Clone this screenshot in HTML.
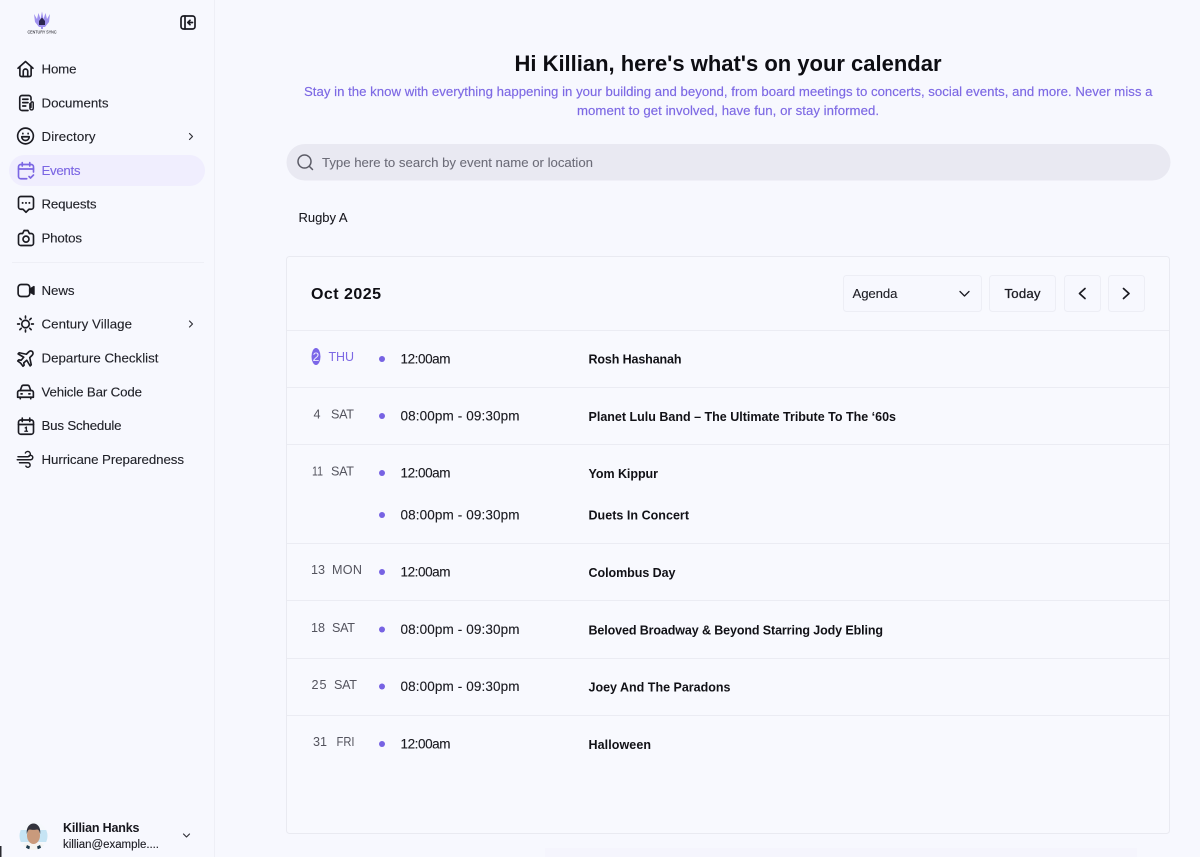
<!DOCTYPE html>
<html><head><meta charset="utf-8"><title>Events</title>
<style>
html,body{margin:0;padding:0;width:1200px;height:857px;overflow:hidden;background:#f7f8fe}
svg{display:block;position:absolute;left:0;top:0}
text{font-family:"Liberation Sans",sans-serif;font-size:13px;fill:#1d1d24;stroke:#1d1d24;stroke-width:.18px}
.n{font-size:13.300px;fill:#1f2027;stroke:#1f2027;stroke-width:.12px}
.t{font-size:13.500px;fill:#1a1a20;stroke:#1a1a20;stroke-width:.12px}
.b{font-weight:700;stroke:none;fill:#111116;font-size:12.500px}
.g{fill:#54545e;stroke:none;font-size:12.600px}
.ic{fill:none;stroke:#1b1b22;stroke-width:2;stroke-linecap:round;stroke-linejoin:round}
.l{stroke:#ebecf3;stroke-width:1}
.btn{fill:#f7f8fe;stroke:#edeef5}
.d{fill:#7763e3}
</style></head><body>
<svg width="1200" height="857" viewBox="0 0 1200 857" xmlns="http://www.w3.org/2000/svg">
<rect width="1200" height="857" fill="#f7f8fe"/>
<line x1="214.500" y1="0" x2="214.500" y2="857" stroke="#eeeff6"/>
<rect x="0" y="846" width="1.500" height="11" fill="#2a2a30"/>

<!-- logo -->
<g fill="#9f91ee">
<path d="M34 14 L37 19 L38.500 13 L40.500 19 L42 11.500 L43.500 19 L45.500 13 L47 19 L50 14 L49 22 L45 27 L39 27 L35 22Z"/>
<path d="M42 17.500 L45 21 V25 H39 V21Z" fill="#2b2650"/>
<rect x="41" y="27" width="2" height="2"/>
</g>
<text x="27.500" y="33.500" style="font-size:4.200px;stroke-width:.05px" textLength="29" lengthAdjust="spacingAndGlyphs">CENTURY SYNC</text>

<!-- collapse -->
<g transform="translate(180,15)" class="ic" style="stroke-width:1.700">
<rect x="1" y="1" width="14" height="13" rx="2.500"/><line x1="5" y1="1" x2="5" y2="14"/>
<path d="M12.500 7.500H8M10 5.300 7.800 7.500 10 9.700"/>
</g>

<!-- active pill -->
<rect x="9" y="155" width="196" height="31" rx="15.500" fill="#f0eefe"/>

<!-- icons -->
<g class="ic" style="stroke-width:2.200">
<g transform="translate(16.500,60) scale(.75)"><path d="M2 11 12 2l10 9"/><path d="M4.500 9v11a2 2 0 0 0 2 2h11a2 2 0 0 0 2-2V9"/><path d="M9 22v-7a3 3 0 0 1 6 0v7"/></g>
<g transform="translate(17.500,94) scale(.75)"><path d="M18 8V5a3 3 0 0 0-3-3H6a3 3 0 0 0-3 3v14a3 3 0 0 0 3 3h8"/><path d="M7 7h7M7 11.500h7M7 16h4"/><path d="M16.500 13v6a2.200 2.200 0 0 0 4.500 0v-7a1.500 1.500 0 0 0-3 0v6" style="stroke-width:1.900"/></g>
<g transform="translate(16.500,127) scale(.75)"><circle cx="12" cy="12" r="10.500"/><path d="M7 13h10a5 5 0 0 1-10 0Z"/><path d="M8.500 8.500v.5M15.500 8.500v.5"/></g>
<g transform="translate(17,161.500) scale(.75)" style="stroke:#7b66e3"><path d="M22 14V7a3 3 0 0 0-3-3H5a3 3 0 0 0-3 3v13a3 3 0 0 0 3 3h8"/><path d="M2 10h20M7 1.500V6M17 1.500V6"/><path d="m16 20 2 2 4-4"/></g>
<g transform="translate(17,195) scale(.75)"><path d="M5 2h14a3 3 0 0 1 3 3v11a3 3 0 0 1-3 3h-3l-4 4-4-4H5a3 3 0 0 1-3-3V5a3 3 0 0 1 3-3Z"/><path d="M7.500 10.500v.1M12 10.500v.1M16.500 10.500v.1" style="stroke-width:2.600"/></g>
<g transform="translate(17,229) scale(.75)"><path d="M5 6h2.500l2-4h5l2 4H19a3 3 0 0 1 3 3v10a3 3 0 0 1-3 3H5a3 3 0 0 1-3-3V9a3 3 0 0 1 3-3Z"/><circle cx="12" cy="13.500" r="4"/></g>
<g transform="translate(17,281.500) scale(.75)"><rect x="1.500" y="4" width="15.500" height="16" rx="4"/><path d="M17 10.500 22.500 7v10L17 13.500Z" fill="#1b1b22"/></g>
<g transform="translate(16.500,315) scale(.75)"><circle cx="12" cy="12" r="5"/><path d="M12 1.500v2.500M12 20v2.500M1.500 12H4M20 12h2.500M4.500 4.500l1.800 1.800M17.700 17.700l1.800 1.800M4.500 19.500l1.800-1.800M17.700 6.300l1.800-1.800"/></g>
<g transform="translate(17,349) scale(.75)"><path d="M20.500 3.500c-1.500-1.500-3.500-1-5 .5l-3 3L3 5 1.500 6.500 9 11l-3.500 4-3-.5L1 16l4 3 3 4 1.500-1.500-.5-3 4-3.500 4.500 7.500L19 21l-2-9.500 3-3c1.500-1.500 2-3.500.5-5Z"/></g>
<g transform="translate(16.500,383) scale(.75)"><path d="M5 10 7 4.500A2.500 2.500 0 0 1 9.300 3h5.400A2.500 2.500 0 0 1 17 4.500L19 10"/><path d="M4 10h16a2.500 2.500 0 0 1 2.500 2.500V19h-21v-6.500A2.500 2.500 0 0 1 4 10Z"/><path d="M6 14.500h1.500M16.500 14.500H18M5 19v2M19 19v2"/></g>
<g transform="translate(17,417) scale(.75)"><rect x="2" y="4" width="20" height="19" rx="3"/><path d="M2 10h20M7 1.500V6M17 1.500V6"/><path d="M11 14.500l1.500-1V19M10.500 19H14" style="stroke-width:1.800"/></g>
<g transform="translate(16.500,450) scale(.75)" style="stroke-width:1.900"><path d="M2 9h13a3.500 3.500 0 1 0-3.200-5"/><path d="M1 13h18a3 3 0 1 0-2.500-5"/><path d="M4 17h11a3 3 0 1 1-2.500 4.500"/></g>
</g>

<!-- nav text -->
<text class="n" x="41.500" y="73.500" textLength="35">Home</text>
<text class="n" x="41.500" y="107.500" textLength="67">Documents</text>
<text class="n" x="41.500" y="141" textLength="54">Directory</text>
<text class="n" x="41.500" y="175" textLength="39" style="fill:#7b66e3;stroke:#7b66e3">Events</text>
<text class="n" x="41.500" y="208.500" textLength="55">Requests</text>
<text class="n" x="41.500" y="242.500" textLength="40.500">Photos</text>
<line x1="12" y1="262.500" x2="204" y2="262.500" stroke="#eeeff6"/>
<text class="n" x="41.500" y="295" textLength="33">News</text>
<text class="n" x="41.500" y="328.500" textLength="90.500">Century Village</text>
<text class="n" x="41.500" y="362.500" textLength="117">Departure Checklist</text>
<text class="n" x="41.500" y="396.500" textLength="100.500">Vehicle Bar Code</text>
<text class="n" x="41.500" y="430" textLength="80">Bus Schedule</text>
<text class="n" x="41.500" y="464" textLength="142.500">Hurricane Preparedness</text>

<g class="ic" style="stroke-width:1.200;stroke:#33333a">
<path d="M189.500 133.500 192.500 136.500 189.500 139.500"/>
<path d="M189.500 321 192.500 324 189.500 327"/>
<path d="M183.500 834 186.500 837 189.500 834"/>
</g>

<!-- user -->
<defs><clipPath id="av"><circle cx="33.500" cy="836" r="14"/></clipPath></defs>
<g clip-path="url(#av)">
<rect x="19" y="822" width="29" height="28" fill="#f5f8fc"/>
<rect x="19" y="830" width="29" height="12" fill="#c6e4f4"/>
<path d="M21 850c1-6 6-8 12.500-8s11.500 2 12.500 8Z" fill="#f4f4f2"/>
<path d="M25 850l2-5 3 1.500-1 3.500ZM42 850l-2-5-3 1.500 1 3.500Z" fill="#1f3b4d"/>
<ellipse cx="33.500" cy="835.500" rx="6.500" ry="8.500" fill="#c99a7c"/>
<path d="M26.800 834c-.800-7 3-10.500 6.700-10.500s7.500 3.500 6.700 10.500c-.800-3-1.700-4.500-3-4.500-2 .500-5.400 .500-7.400 0-1.300 0-2.200 1.500-3 4.500Z" fill="#33333d"/>
</g>
<text x="63" y="832" textLength="76.500" style="font-weight:700;stroke:none;font-size:12.500px;fill:#17171e">Killian Hanks</text>
<text x="63" y="848" textLength="96" style="font-size:11.500px;stroke-width:.12px">killian@example....</text>

<!-- heading -->
<text x="728" y="71" text-anchor="middle" textLength="427" style="font-size:22px;font-weight:700;fill:#0d0d12;stroke:none">Hi Killian, here's what's on your calendar</text>
<text x="304" y="96" textLength="848.500" style="fill:#7d69e4;stroke:#7d69e4;font-size:13.200px;stroke-width:.16px">Stay in the know with everything happening in your building and beyond, from board meetings to concerts, social events, and more. Never miss a</text>
<text x="577" y="115" textLength="302" style="fill:#7d69e4;stroke:#7d69e4;font-size:13.200px;stroke-width:.16px">moment to get involved, have fun, or stay informed.</text>

<!-- search -->
<rect x="286.500" y="144" width="884" height="36.500" rx="18.250" fill="#e9e9f2"/>
<g class="ic" style="stroke:#5b5b66;stroke-width:1.500"><circle cx="304.500" cy="161.500" r="6.500"/><path d="M309.500 166.500 312.500 169.500"/></g>
<text x="322" y="167" textLength="271" style="fill:#6c6c78;stroke:#6c6c78;stroke-width:.08px;font-size:13.200px">Type here to search by event name or location</text>

<text x="298.500" y="222" textLength="49" style="font-size:13px;stroke-width:.08px;fill:#17171d">Rugby A</text>

<!-- calendar card -->
<rect x="286.500" y="256.500" width="883" height="577" rx="3" fill="#f8f9fe" stroke="#e9eaf1"/>
<text x="311" y="299" textLength="70" style="font-size:16px;font-weight:700;fill:#0e0e13;stroke:none">Oct 2025</text>

<rect class="btn" x="843.500" y="275.500" width="138" height="36" rx="3"/>
<text x="852.500" y="298" textLength="45" style="font-size:13.200px;stroke-width:.1px">Agenda</text>
<path class="ic" style="stroke-width:1.300" d="M960 291.500 964.500 296 969 291.500"/>
<rect class="btn" x="989.500" y="275.500" width="66" height="36" rx="3"/>
<text x="1004.500" y="298" textLength="36" style="font-size:13.200px;stroke-width:.3px">Today</text>
<rect class="btn" x="1064.500" y="275.500" width="36" height="36" rx="3"/>
<path class="ic" d="M1085 288.500 1079.500 293.500 1085 298.500" style="stroke-width:1.700"/>
<rect class="btn" x="1108.500" y="275.500" width="36" height="36" rx="3"/>
<path class="ic" d="M1123.500 288.500 1129 293.500 1123.500 298.500" style="stroke-width:1.700"/>

<line class="l" x1="287" y1="330.500" x2="1169" y2="330.500"/>
<line class="l" x1="287" y1="387.500" x2="1169" y2="387.500"/>
<line class="l" x1="287" y1="444.500" x2="1169" y2="444.500"/>
<line class="l" x1="287" y1="543.500" x2="1169" y2="543.500"/>
<line class="l" x1="287" y1="600.500" x2="1169" y2="600.500"/>
<line class="l" x1="287" y1="658.500" x2="1169" y2="658.500"/>
<line class="l" x1="287" y1="715.500" x2="1169" y2="715.500"/>

<!-- row 1 -->
<ellipse cx="316" cy="356.500" rx="4.500" ry="8.500" fill="#7b66e8"/>
<text x="316" y="361" text-anchor="middle" style="font-size:12px;fill:#efedff;stroke:none">2</text>
<text x="328.500" y="361" textLength="25.500" style="fill:#7d69e4;stroke:none;font-size:12.500px">THU</text>
<circle class="d" cx="382" cy="359" r="3"/>
<text x="400.500" y="363.500" textLength="50" class="t">12:00am</text>
<text x="588.500" y="363.500" textLength="93" class="b">Rosh Hashanah</text>

<!-- row 2 -->
<text class="g" x="313.500" y="418.500">4</text>
<text class="g" x="331" y="418.500" textLength="23">SAT</text>
<circle class="d" cx="382" cy="416" r="3"/>
<text x="400.500" y="420.500" textLength="119" class="t">08:00pm - 09:30pm</text>
<text x="588.500" y="421" textLength="307.500" class="b">Planet Lulu Band – The Ultimate Tribute To The ‘60s</text>

<!-- row 3 -->
<text class="g" x="312" y="475.500" textLength="11" lengthAdjust="spacingAndGlyphs">11</text>
<text class="g" x="331" y="475.500" textLength="23">SAT</text>
<circle class="d" cx="382" cy="473" r="3"/>
<text x="400.500" y="477.500" textLength="50" class="t">12:00am</text>
<text x="588.500" y="478" textLength="69.500" class="b">Yom Kippur</text>
<circle class="d" cx="382" cy="515" r="3"/>
<text x="400.500" y="519.500" textLength="119" class="t">08:00pm - 09:30pm</text>
<text x="588.500" y="519.500" textLength="100.500" class="b">Duets In Concert</text>

<!-- row 4 -->
<text class="g" x="311" y="574" textLength="14">13</text>
<text class="g" x="332" y="574" textLength="30">MON</text>
<circle class="d" cx="382" cy="572" r="3"/>
<text x="400.500" y="576.500" textLength="50" class="t">12:00am</text>
<text x="588.500" y="577" textLength="87" class="b">Colombus Day</text>

<!-- row 5 -->
<text class="g" x="311" y="632" textLength="14">18</text>
<text class="g" x="332" y="632" textLength="23">SAT</text>
<circle class="d" cx="382" cy="629.500" r="3"/>
<text x="400.500" y="634" textLength="119" class="t">08:00pm - 09:30pm</text>
<text x="588.500" y="634.500" textLength="294.500" class="b">Beloved Broadway &amp; Beyond Starring Jody Ebling</text>

<!-- row 6 -->
<text class="g" x="311.500" y="689" textLength="15">25</text>
<text class="g" x="334" y="689" textLength="23">SAT</text>
<circle class="d" cx="382" cy="686.500" r="3"/>
<text x="400.500" y="691" textLength="119" class="t">08:00pm - 09:30pm</text>
<text x="588.500" y="691.500" textLength="142" class="b">Joey And The Paradons</text>

<!-- row 7 -->
<text class="g" x="313" y="746" textLength="14">31</text>
<text class="g" x="336.500" y="746" textLength="18" lengthAdjust="spacingAndGlyphs">FRI</text>
<circle class="d" cx="382" cy="744" r="3"/>
<text x="400.500" y="748.500" textLength="50" class="t">12:00am</text>
<text x="588.500" y="749" textLength="62.500" class="b">Halloween</text>

<rect x="545" y="848" width="592" height="9" fill="#f5f5fd"/>
</svg>
</body></html>
